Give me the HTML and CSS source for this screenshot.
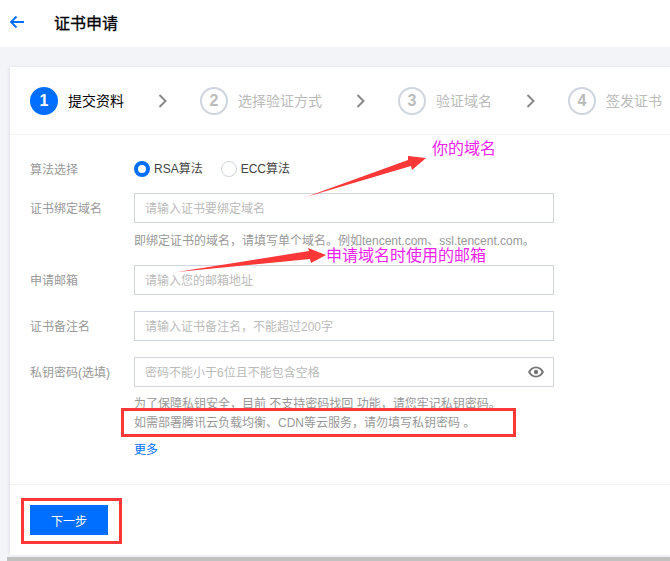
FILE: index.html
```html
<!DOCTYPE html>
<html lang="zh-CN">
<head>
    <meta charset="UTF-8">
    <title>证书申请</title>
    <link rel="stylesheet" href="styles.css">
</head>
<body>
    <header class="topbar">
        <svg class="back-icon" width="16" height="14" viewBox="0 0 16 14"><path d="M15 7H2M7.500 1.500 2 7l5.500 5.500" fill="none" stroke="#006eff" stroke-width="1.800"/></svg>
        <h1 class="page-title">证书申请</h1>
    </header>

    <main class="content">
        <section class="card">
            <div class="steps">
                <div class="step step-active"><span class="step-num">1</span><span class="step-name">提交资料</span></div>
                <svg class="step-arrow" width="10" height="14" viewBox="0 0 10 14"><path d="M1.500 1 7.500 7l-6 6" fill="none" stroke="#888" stroke-width="2"/></svg>
                <div class="step"><span class="step-num">2</span><span class="step-name">选择验证方式</span></div>
                <svg class="step-arrow" width="10" height="14" viewBox="0 0 10 14"><path d="M1.500 1 7.500 7l-6 6" fill="none" stroke="#888" stroke-width="2"/></svg>
                <div class="step"><span class="step-num">3</span><span class="step-name">验证域名</span></div>
                <svg class="step-arrow" width="10" height="14" viewBox="0 0 10 14"><path d="M1.500 1 7.500 7l-6 6" fill="none" stroke="#888" stroke-width="2"/></svg>
                <div class="step"><span class="step-num">4</span><span class="step-name">签发证书</span></div>
            </div>

            <form class="form">
                <div class="row row-radio">
                    <span class="label">算法选择</span>
                    <label class="radio radio-on"><i></i>RSA算法</label>
                    <label class="radio"><i></i>ECC算法</label>
                </div>
                <div class="row row-domain">
                    <span class="label">证书绑定域名</span>
                    <div class="field">
                        <div class="input"><span>请输入证书要绑定域名</span></div>
                        <p class="hint">即绑定证书的域名，请填写单个域名。例如tencent.com、ssl.tencent.com。</p>
                    </div>
                </div>
                <div class="row row-mail">
                    <span class="label">申请邮箱</span>
                    <div class="field"><div class="input"><span>请输入您的邮箱地址</span></div></div>
                </div>
                <div class="row row-note">
                    <span class="label">证书备注名</span>
                    <div class="field"><div class="input"><span>请输入证书备注名，不能超过200字</span></div></div>
                </div>
                <div class="row row-key">
                    <span class="label">私钥密码(选填)</span>
                    <div class="field">
                        <div class="input">
                            <span>密码不能小于6位且不能包含空格</span>
                            <svg class="eye" width="16" height="12" viewBox="0 0 16 12"><path fill-rule="evenodd" fill="#777" d="M8 .5C4.400.5 1.500 2.700 0 6c1.500 3.300 4.400 5.500 8 5.500s6.500-2.200 8-5.500C14.500 2.700 11.600.5 8 .5Zm0 1.800c2.400 0 4.500 1.400 5.700 3.700C12.500 8.300 10.400 9.700 8 9.700S3.500 8.300 2.300 6C3.500 3.700 5.600 2.300 8 2.300ZM8 3.800a2.200 2.200 0 1 0 0 4.400 2.200 2.200 0 0 0 0-4.400Z"/></svg>
                        </div>
                        <p class="hint hint-key">为了保障私钥安全，目前 不支持密码找回 功能，请您牢记私钥密码。</p>
                        <p class="hint hint-key">如需部署腾讯云负载均衡、CDN等云服务，请勿填写私钥密码 。</p>
                        <a class="more" href="#">更多</a>
                    </div>
                </div>
            </form>

            <div class="footer">
                <button type="button" class="next-btn">下一步</button>
            </div>
        </section>
    </main>
    <div class="scrollbar"></div>

    <!-- 截图上的标注 -->
    <svg class="marks" width="670" height="561" viewBox="0 0 670 561">
        <polygon fill="#fb3737" points="306,197 408,160 408,156 426,158 412,170 411,166"/>
        <polygon fill="#fb3737" points="177,272 309,251 308,248 326,255 311,263 310,259"/>
        <rect x="122.500" y="409.500" width="392" height="26" fill="none" stroke="#fb3737" stroke-width="3"/>
        <rect x="22.500" y="499.500" width="98" height="43" fill="none" stroke="#fb3737" stroke-width="3"/>
    </svg>
    <span class="note note-domain">你的域名</span>
    <span class="note note-mail">申请域名时使用的邮箱</span>
</body>
</html>
```

FILE: styles.css
```css
* {
    margin: 0;
    padding: 0;
    box-sizing: border-box;
}
html, body {
    height: 561px;
    overflow: hidden;
}
body {
    position: relative;
    font-family: "Liberation Sans", "Noto Sans CJK SC", sans-serif;
    font-size: 12px;
    color: #444;
    background-color: #f2f4f8;
}
.topbar {
    display: flex;
    align-items: center;
    height: 47px;
    padding: 0 0 4px 9px;
    background-color: #fff;
}
.back-icon {
    margin-right: 29px;
}
.page-title {
    font-size: 16px;
    font-weight: normal;
    -webkit-text-stroke: 0.3px #000;
    color: #000;
}
.content {
    padding: 20px 0 0 10px;
}
.card {
    height: 488px;
    background-color: #fff;
    box-shadow: -1px 0 3px rgba(0, 0, 0, 0.08);
}
.steps {
    display: flex;
    align-items: center;
    height: 68px;
    padding-left: 20px;
    border-bottom: 1px solid #f2f2f2;
    white-space: nowrap;
    overflow: hidden;
}
.step {
    display: flex;
    align-items: center;
    flex-shrink: 0;
}
.step-num {
    display: flex;
    align-items: center;
    justify-content: center;
    width: 28px;
    height: 28px;
    margin-right: 10px;
    border: 2px solid #cfd5de;
    border-radius: 50%;
    font-size: 16px;
    font-weight: bold;
    color: #bbb;
}
.step-name {
    font-size: 14px;
    line-height: 20px;
    color: #bbb;
}
.step-active .step-num {
    border-color: #006eff;
    background-color: #006eff;
    color: #fff;
}
.step-active .step-name {
    color: #000;
}
.step-arrow {
    flex-shrink: 0;
    margin: 0 32px 0 34px;
}
.form {
    height: 350px;
    padding: 26px 0 0 20px;
    border-bottom: 1px solid #f2f2f2;
}
.row {
    display: flex;
}
.label {
    flex: 0 0 104px;
    line-height: 18px;
    color: #999;
}
.row-radio {
    align-items: flex-start;
    height: 18px;
    margin-bottom: 14px;
}
.row-domain {
    height: 72px;
}
.row-mail,
.row-note {
    height: 46px;
}
.row-domain .label,
.row-mail .label,
.row-note .label,
.row-key .label {
    padding-top: 7px;
}
.radio {
    display: flex;
    align-items: center;
    height: 16px;
    line-height: 16px;
    margin-right: 18px;
    color: #444;
}
.radio i {
    width: 16px;
    height: 16px;
    margin-right: 4px;
    border: 1px solid #cfd5de;
    border-radius: 50%;
}
.radio-on i {
    border: 4px solid #006eff;
}
.field {
    width: 420px;
}
.input {
    display: flex;
    align-items: center;
    justify-content: space-between;
    height: 30px;
    padding: 0 9px 2px 10px;
    border: 1px solid #cfd5de;
    color: #bbb;
    background-color: #fff;
}
.eye {
    margin-top: 2px;
}
.hint {
    margin-top: 9px;
    line-height: 18px;
    color: #999;
    white-space: nowrap;
}
.hint-key {
    margin-top: 0;
    line-height: 19px;
}
.hint-key:first-of-type {
    margin-top: 8px;
}
.more {
    display: block;
    margin-top: 8px;
    line-height: 18px;
    color: #006eff;
    text-decoration: none;
}
.footer {
    padding: 20px 0 0 20px;
}
.next-btn {
    display: block;
    width: 78px;
    height: 30px;
    border: none;
    font-family: inherit;
    font-size: 12px;
    color: #fff;
    background-color: #006eff;
}
.scrollbar {
    position: absolute;
    left: 7px;
    right: 0;
    bottom: 0;
    height: 4px;
    background-color: #c1c1c1;
}
.marks {
    position: absolute;
    left: 0;
    top: 0;
}
.note {
    position: absolute;
    font-size: 16px;
    line-height: 20px;
    color: #f022f0;
    white-space: nowrap;
}
.note-domain {
    left: 432px;
    top: 139px;
}
.note-mail {
    left: 326px;
    top: 246px;
}
```
